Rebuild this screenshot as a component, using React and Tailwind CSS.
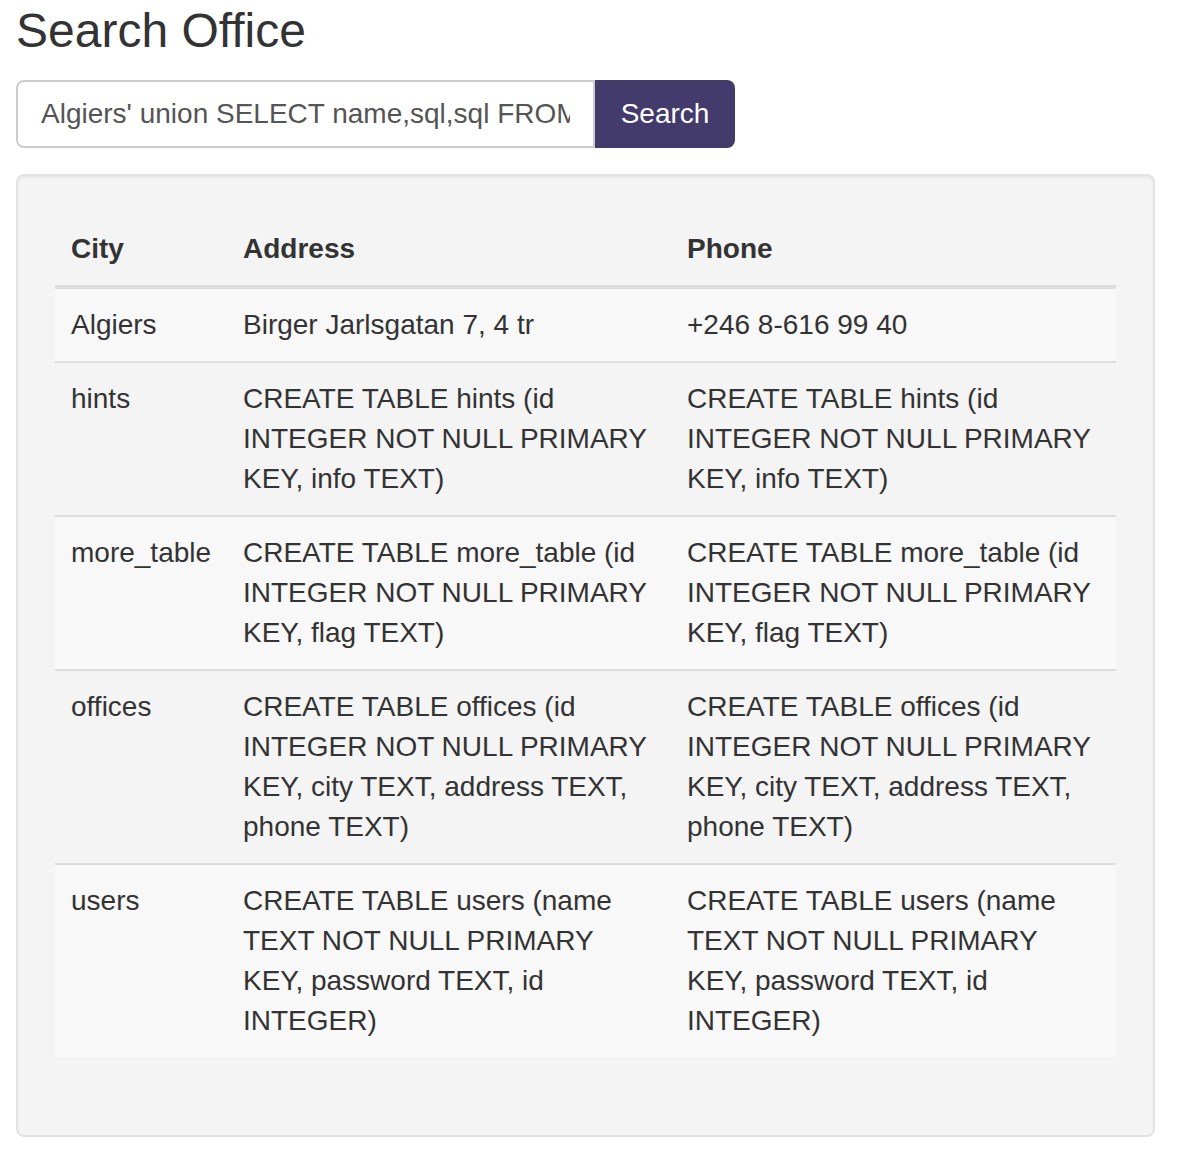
export default function App() {
  const rows = [
    ["Algiers", "Birger Jarlsgatan 7, 4 tr", "+246 8-616 99 40"],
    ["hints", "CREATE TABLE hints (id INTEGER NOT NULL PRIMARY KEY, info TEXT)", "CREATE TABLE hints (id INTEGER NOT NULL PRIMARY KEY, info TEXT)"],
    ["more_table", "CREATE TABLE more_table (id INTEGER NOT NULL PRIMARY KEY, flag TEXT)", "CREATE TABLE more_table (id INTEGER NOT NULL PRIMARY KEY, flag TEXT)"],
    ["offices", "CREATE TABLE offices (id INTEGER NOT NULL PRIMARY KEY, city TEXT, address TEXT, phone TEXT)", "CREATE TABLE offices (id INTEGER NOT NULL PRIMARY KEY, city TEXT, address TEXT, phone TEXT)"],
    ["users", "CREATE TABLE users (name TEXT NOT NULL PRIMARY KEY, password TEXT, id INTEGER)", "CREATE TABLE users (name TEXT NOT NULL PRIMARY KEY, password TEXT, id INTEGER)"],
  ];
  return (
    <div className="bg-white min-h-[1154px] pl-4 pr-[32px] text-[#333] text-[28px] leading-[40px]" style={{ fontFamily: '"Liberation Sans", Arial, sans-serif' }}>
      <h3 className="text-[48px] leading-[52.8px] font-normal pt-[5px] mb-[22px]">Search Office</h3>
      <div className="flex w-[719px]">
        <input
          readOnly
          value="Algiers' union SELECT name,sql,sql FROM sqlite_master WHERE type='table'--"
          className="w-[579px] h-[68px] border-2 border-[#ccc] rounded-l-[8px] px-[23px] text-[#555] text-[28px] bg-white outline-none"
          style={{ fontFamily: '"Liberation Sans", Arial, sans-serif' }}
        />
        <button className="w-[140px] h-[68px] bg-[#433b6b] text-white rounded-r-[8px] text-[28px]">Search</button>
      </div>
      <div className="mt-[26px] bg-[#f4f4f4] border-2 border-[#e3e3e3] rounded-[8px] p-[37px] pb-[78px] shadow-[inset_0_2px_2px_rgba(0,0,0,0.05)]">
        <table className="w-full table-fixed border-collapse">
          <thead>
            <tr className="border-b-4 border-[#ddd]">
              <th className="w-[172px] text-left font-bold p-4 align-bottom">City</th>
              <th className="w-[444px] text-left font-bold p-4 align-bottom">Address</th>
              <th className="text-left font-bold p-4 align-bottom">Phone</th>
            </tr>
          </thead>
          <tbody>
            {rows.map((r, i) => (
              <tr key={i} className={(i % 2 === 0 ? "bg-[#f8f8f8] " : "") + (i < rows.length - 1 ? "border-b-2 border-[#ddd]" : "")}>
                {r.map((c, j) => (
                  <td key={j} className="p-4 align-top">{c}</td>
                ))}
              </tr>
            ))}
          </tbody>
        </table>
      </div>
    </div>
  );
}
